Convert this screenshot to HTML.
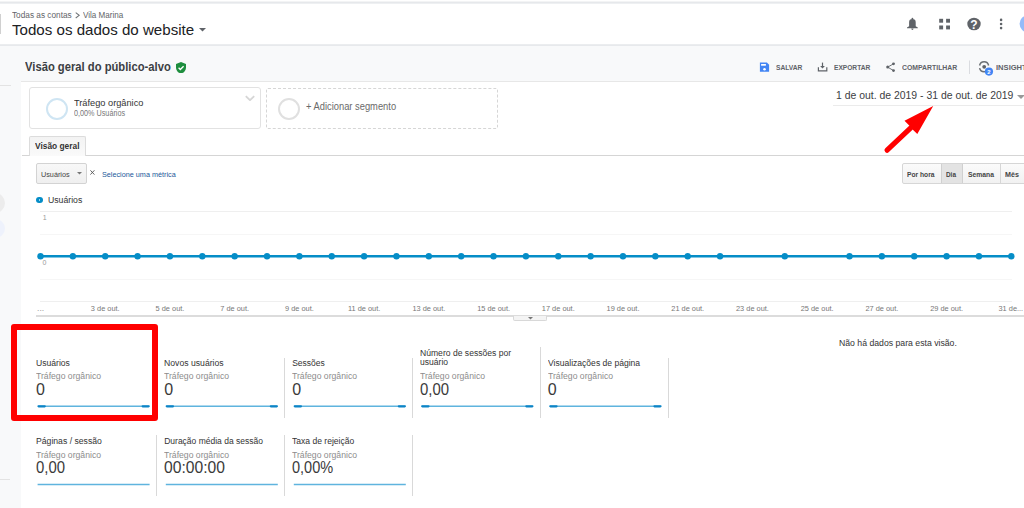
<!DOCTYPE html>
<html><head><meta charset="utf-8">
<style>
*{margin:0;padding:0;box-sizing:border-box}
html,body{width:1024px;height:508px;overflow:hidden;background:#f8f9fa;font-family:"Liberation Sans",sans-serif;position:relative}
.a{position:absolute}
.t{position:absolute;line-height:1;white-space:nowrap;transform-origin:0 0}
</style></head><body>
<!-- header -->
<div class="a" style="left:0;top:0;width:1024px;height:45px;background:#fff"></div>
<div class="a" style="left:0;top:1px;width:1024px;height:1px;background:#f3f4f5"></div>
<div class="a" style="left:0;top:2px;width:1024px;height:1px;background:#e6e8eb"></div>
<div class="a" style="left:0;top:3px;width:1024px;height:1px;background:#eef0f2"></div>
<div class="a" style="left:0;top:44px;width:1024px;height:1px;background:#ebedef"></div>
<div class="a" style="left:0;top:45px;width:1024px;height:1px;background:#e7e9ec"></div>
<div class="a" style="left:0;top:14px;width:1px;height:20px;background:#d0d0d0"></div>
<svg class="a" style="left:0;top:0" width="100" height="30"><path d="M75.7 12.6L79.2 15.3L75.7 18" stroke="#6f7377" stroke-width="1.05" fill="none"/></svg>
<svg class="a" style="left:199px;top:28px" width="7" height="4"><path d="M0 0L7 0L3.5 3.5Z" fill="#5f6368"/></svg>

<!-- header icons -->
<svg class="a" style="left:0;top:0" width="1024" height="45">
<path d="M909.1 22.2Q909.1 19.1 912.4 19.1Q915.7 19.1 915.7 22.2V26.3L917.8 27.5V28.3H907V27.5L909.1 26.3Z" fill="#5f6368"/><ellipse cx="912.4" cy="18.7" rx="0.9" ry="1" fill="#5f6368"/>
<path d="M911.3 28.6h2.2c0 .7-.5 1.5-1.1 1.5s-1.1-.8-1.1-1.5z" fill="#5f6368"/>
<rect x="939.2" y="18.8" width="3.9" height="3.9" fill="#5f6368"/><rect x="946.1" y="18.8" width="3.9" height="3.9" fill="#5f6368"/><rect x="939.2" y="25.5" width="3.9" height="3.9" fill="#5f6368"/><rect x="946.1" y="25.5" width="3.9" height="3.9" fill="#5f6368"/>
<ellipse cx="974" cy="24" rx="6.7" ry="6.3" fill="#5f6368"/>
<text x="974" y="28.7" text-anchor="middle" font-family="Liberation Sans" font-weight="700" font-size="12" fill="#fff">?</text>
<circle cx="1001.1" cy="19.9" r="1.3" fill="#5f6368"/><circle cx="1001.1" cy="24" r="1.3" fill="#5f6368"/><circle cx="1001.1" cy="28.1" r="1.3" fill="#5f6368"/>
<circle cx="1028.4" cy="23.8" r="8.8" fill="#94bbf9"/>
</svg>

<!-- sidebar faint -->
<div class="a" style="left:0;top:85px;width:10.6px;height:1px;background:#e3e3e3"></div>
<div class="a" style="left:0;top:479px;width:10px;height:1px;background:#e3e3e3"></div>
<div class="a" style="left:-15px;top:193px;width:20px;height:20px;border-radius:50%;background:#ececec"></div>
<div class="a" style="left:-15px;top:219px;width:20px;height:19px;border-radius:50%;background:#eef2fc"></div>

<!-- title shield -->
<svg class="a" style="left:176px;top:61.5px" width="10" height="11.5" viewBox="0 0 10 11.5"><path d="M5 0L0 2v3.4c0 3 2.1 5.5 5 6.1 2.9-.6 5-3.1 5-6.1V2z" fill="#1e8e3e"/><path d="M2.6 5.8l1.7 1.7 3.3-3.3" stroke="#fff" stroke-width="1.3" fill="none"/></svg>

<!-- actions icons -->
<svg class="a" style="left:0;top:0" width="1024" height="81">
<path d="M759.9 62.6h7l2.2 2.2v6.85h-9.2z" fill="#4285f4"/><rect x="761.1" y="64" width="4.8" height="1.7" fill="#fff"/><circle cx="764.5" cy="69.2" r="1.25" fill="#fff"/>
<path d="M822.5 62.6v4.2" stroke="#5f6368" stroke-width="1.2"/><path d="M820.1 66.1h4.8l-2.4 2.5z" fill="#5f6368"/>
<path d="M818.4 67.2v3.7h8.4v-3.7" stroke="#5f6368" stroke-width="1.2" fill="none"/>
<circle cx="893.5" cy="63.85" r="1.45" fill="#5f6368"/><circle cx="887.7" cy="67.1" r="1.5" fill="#5f6368"/><circle cx="893.5" cy="70.6" r="1.45" fill="#5f6368"/>
<path d="M893.5 63.85L887.7 67.1L893.5 70.6" stroke="#5f6368" stroke-width="0.9" fill="none"/>
<rect x="969" y="60.5" width="1" height="13.5" fill="#dadce0"/>
<path d="M979.6 65.5A4.6 4.6 0 0 1 988.6 65.5M988.6 68.1A4.6 4.6 0 0 1 979.6 68.1" stroke="#6b6f73" stroke-width="1.5" fill="none"/>
<circle cx="984.2" cy="66.8" r="1.9" fill="#5f6368"/>
<circle cx="988.95" cy="71.6" r="4.1" fill="#4285f4"/>
<text x="988.95" y="73.9" text-anchor="middle" font-family="Liberation Sans" font-weight="700" font-size="6" fill="#fff">2</text>
</svg>

<!-- white panel -->
<div class="a" style="left:21px;top:81px;width:1003px;height:427px;background:#fff;border-top:1px solid #e7e7e7"></div>

<!-- segments -->
<div class="a" style="left:29px;top:87px;width:231.5px;height:42px;border:1px solid #e2e2e2;border-radius:3px;background:#fff"></div>
<div class="a" style="left:46px;top:97.5px;width:22px;height:22px;border-radius:50%;border:2.5px solid #cfe5f3"></div>
<svg class="a" style="left:245px;top:95px" width="10" height="6"><path d="M0.8 1.2L5 5.2L9.2 1.2" stroke="#d6d6d6" stroke-width="1.8" fill="none"/></svg>
<div class="a" style="left:266px;top:88px;width:232px;height:41px;border:1px dashed #d6d6d6;border-radius:2px"></div>
<div class="a" style="left:278px;top:97.5px;width:22px;height:22px;border-radius:50%;border:2.5px solid #e0e0e0"></div>

<!-- date range -->
<svg class="a" style="left:1017px;top:95px" width="8" height="4"><path d="M0 0H8L4 4Z" fill="#999"/></svg>
<div class="a" style="left:833px;top:105px;width:191px;height:1px;background:#ebebeb"></div>

<!-- tab -->
<div class="a" style="left:22px;top:155px;width:1002px;height:1px;background:#d5d5d5"></div>
<div class="a" style="left:29.4px;top:136px;width:56.6px;height:20px;border:1px solid #dcdcdc;border-bottom:none;background:linear-gradient(#f3f3f3,#fafafa);border-radius:2px 2px 0 0"></div>

<!-- metric select -->
<div class="a" style="left:35.8px;top:163px;width:51px;height:21px;border:1px solid #d3d3d3;border-radius:2px;background:linear-gradient(#f8f8f8,#efefef)"></div>
<svg class="a" style="left:76.5px;top:172.4px" width="5" height="3"><path d="M0 0H5L2.5 2.5Z" fill="#777"/></svg>
<svg class="a" style="left:89.8px;top:169.8px" width="5" height="6"><path d="M0.4 0.3L4.4 4.6M4.4 0.3L0.4 4.6" stroke="#555" stroke-width="0.9"/></svg>

<!-- period buttons -->
<div class="a" style="left:902px;top:163px;width:130px;height:21px;border:1px solid #d6d6d6;border-radius:2px;background:linear-gradient(#fbfbfb,#f1f1f1)"></div>
<div class="a" style="left:940.5px;top:164px;width:22.5px;height:19px;background:#e3e3e3;border-left:1px solid #d0d0d0;border-right:1px solid #d0d0d0"></div>
<div class="a" style="left:1000px;top:164px;width:1px;height:19px;background:#d6d6d6"></div>

<!-- legend -->
<div class="a" style="left:35.5px;top:196.9px;width:7.5px;height:6.3px;border-radius:3px;background:#058dc7"></div>
<div class="a" style="left:38.5px;top:199.3px;width:1.5px;height:1.5px;background:#9fd3ea"></div>

<!-- chart -->
<div class="a" style="left:40px;top:211px;width:972px;height:1px;background:#efefef"></div>
<div class="a" style="left:40px;top:233.5px;width:972px;height:1px;background:#f6f6f6"></div>
<div class="a" style="left:40px;top:278.5px;width:972px;height:1px;background:#f6f6f6"></div>
<div class="a" style="left:40px;top:301px;width:972px;height:1px;background:#efefef"></div>
<div class="a" style="left:36px;top:315px;width:988px;height:1.6px;background:#dcdcdc"></div>
<svg class="a" style="left:0;top:0" width="1024" height="508"><line x1="40.5" y1="256.3" x2="1011.3" y2="256.3" stroke="#058dc7" stroke-width="2.6"/><g fill="#058dc7"><circle cx="40.50" cy="256.3" r="3.2"/><circle cx="72.86" cy="256.3" r="3.2"/><circle cx="105.22" cy="256.3" r="3.2"/><circle cx="137.58" cy="256.3" r="3.2"/><circle cx="169.94" cy="256.3" r="3.2"/><circle cx="202.30" cy="256.3" r="3.2"/><circle cx="234.66" cy="256.3" r="3.2"/><circle cx="267.02" cy="256.3" r="3.2"/><circle cx="299.38" cy="256.3" r="3.2"/><circle cx="331.74" cy="256.3" r="3.2"/><circle cx="364.10" cy="256.3" r="3.2"/><circle cx="396.46" cy="256.3" r="3.2"/><circle cx="428.82" cy="256.3" r="3.2"/><circle cx="461.18" cy="256.3" r="3.2"/><circle cx="493.54" cy="256.3" r="3.2"/><circle cx="525.90" cy="256.3" r="3.2"/><circle cx="558.26" cy="256.3" r="3.2"/><circle cx="590.62" cy="256.3" r="3.2"/><circle cx="622.98" cy="256.3" r="3.2"/><circle cx="655.34" cy="256.3" r="3.2"/><circle cx="687.70" cy="256.3" r="3.2"/><circle cx="720.06" cy="256.3" r="3.2"/><circle cx="784.78" cy="256.3" r="3.2"/><circle cx="849.50" cy="256.3" r="3.2"/><circle cx="881.86" cy="256.3" r="3.2"/><circle cx="914.22" cy="256.3" r="3.2"/><circle cx="946.58" cy="256.3" r="3.2"/><circle cx="978.94" cy="256.3" r="3.2"/><circle cx="1011.30" cy="256.3" r="3.2"/></g></svg>
<div class="a" style="left:513px;top:315.5px;width:34px;height:5.5px;background:#f4f4f4;border:1px solid #d8d8d8;border-top:none;border-radius:0 0 2px 2px"></div>
<svg class="a" style="left:527.5px;top:317px" width="5" height="3"><path d="M0 0H5L2.5 2.5Z" fill="#777"/></svg>

<div class="a" style="left:155.8px;top:357.5px;width:1px;height:60.5px;background:#d9d9d9"></div>
<div class="a" style="left:284.1px;top:357.5px;width:1px;height:60.5px;background:#d9d9d9"></div>
<div class="a" style="left:411.8px;top:357.5px;width:1px;height:60.5px;background:#d9d9d9"></div>
<div class="a" style="left:539.9px;top:347.1px;width:1px;height:71.4px;background:#d9d9d9"></div>
<div class="a" style="left:667.7px;top:357.5px;width:1px;height:60.5px;background:#d9d9d9"></div>
<div class="a" style="left:155.8px;top:434.5px;width:1px;height:61.5px;background:#d9d9d9"></div>
<div class="a" style="left:284.1px;top:434.5px;width:1px;height:61.5px;background:#d9d9d9"></div>
<div class="a" style="left:411.8px;top:434.5px;width:1px;height:61.5px;background:#d9d9d9"></div><svg class="a" style="left:0;top:0" width="1024" height="508"><line x1="37.6" y1="406.35" x2="149.6" y2="406.35" stroke="#5fb4de" stroke-width="1.5"/><line x1="38.6" y1="406.35" x2="44.8" y2="406.35" stroke="#0c84c6" stroke-width="2.1" stroke-linecap="round"/><line x1="142.6" y1="406.35" x2="148.6" y2="406.35" stroke="#0c84c6" stroke-width="2.1" stroke-linecap="round"/><line x1="165.8" y1="406.35" x2="277.8" y2="406.35" stroke="#5fb4de" stroke-width="1.5"/><line x1="166.8" y1="406.35" x2="173.0" y2="406.35" stroke="#0c84c6" stroke-width="2.1" stroke-linecap="round"/><line x1="270.8" y1="406.35" x2="276.8" y2="406.35" stroke="#0c84c6" stroke-width="2.1" stroke-linecap="round"/><line x1="293.8" y1="406.35" x2="405.8" y2="406.35" stroke="#5fb4de" stroke-width="1.5"/><line x1="294.8" y1="406.35" x2="301.0" y2="406.35" stroke="#0c84c6" stroke-width="2.1" stroke-linecap="round"/><line x1="398.8" y1="406.35" x2="404.8" y2="406.35" stroke="#0c84c6" stroke-width="2.1" stroke-linecap="round"/><line x1="421.3" y1="406.35" x2="533.3" y2="406.35" stroke="#5fb4de" stroke-width="1.5"/><line x1="422.3" y1="406.35" x2="428.5" y2="406.35" stroke="#0c84c6" stroke-width="2.1" stroke-linecap="round"/><line x1="526.3" y1="406.35" x2="532.3" y2="406.35" stroke="#0c84c6" stroke-width="2.1" stroke-linecap="round"/><line x1="549.4" y1="406.35" x2="661.4" y2="406.35" stroke="#5fb4de" stroke-width="1.5"/><line x1="550.4" y1="406.35" x2="556.6" y2="406.35" stroke="#0c84c6" stroke-width="2.1" stroke-linecap="round"/><line x1="654.4" y1="406.35" x2="660.4" y2="406.35" stroke="#0c84c6" stroke-width="2.1" stroke-linecap="round"/><line x1="37.6" y1="484.55" x2="149.6" y2="484.55" stroke="#5fb4de" stroke-width="1.5"/><line x1="165.8" y1="484.55" x2="277.8" y2="484.55" stroke="#5fb4de" stroke-width="1.5"/><line x1="293.8" y1="484.55" x2="405.8" y2="484.55" stroke="#5fb4de" stroke-width="1.5"/></svg>
<div class="t" style="left:12.00px;top:10.81px;font-size:9.2px;color:#5f6368;transform:scaleX(0.8982);">Todas as contas</div>
<div class="t" style="left:83.00px;top:10.81px;font-size:9.2px;color:#5f6368;transform:scaleX(0.8783);">Vila Marina</div>
<div class="t" style="left:12.00px;top:21.60px;font-size:15px;color:#202124;transform:scaleX(1.0066);">Todos os dados do website</div>
<div class="t" style="left:25.00px;top:61.09px;font-size:12.3px;font-weight:700;color:#3c4043;transform:scaleX(0.9129);">Visão geral do público-alvo</div>
<div class="t" style="left:776.00px;top:63.83px;font-size:8px;font-weight:700;color:#5f6368;transform:scaleX(0.8332);">SALVAR</div>
<div class="t" style="left:834.00px;top:63.83px;font-size:8px;font-weight:700;color:#5f6368;transform:scaleX(0.8258);">EXPORTAR</div>
<div class="t" style="left:902.00px;top:63.83px;font-size:8px;font-weight:700;color:#5f6368;transform:scaleX(0.8588);">COMPARTILHAR</div>
<div class="t" style="left:995.80px;top:63.83px;font-size:8px;font-weight:700;color:#5f6368;transform:scaleX(0.9468);">INSIGHTS</div>
<div class="t" style="left:836.10px;top:89.97px;font-size:10.9px;color:#3c4043;transform:scaleX(0.9571);">1 de out. de 2019 - 31 de out. de 2019</div>
<div class="t" style="left:74.30px;top:97.80px;font-size:9.8px;color:#333;transform:scaleX(0.9414);">Tráfego orgânico</div>
<div class="t" style="left:74.10px;top:110.06px;font-size:8.2px;color:#777;transform:scaleX(0.8838);">0,00% Usuários</div>
<div class="t" style="left:305.70px;top:101.63px;font-size:10px;color:#6a6a6a;transform:scaleX(0.9339);">+ Adicionar segmento</div>
<div class="t" style="left:35.00px;top:140.67px;font-size:9.6px;font-weight:700;color:#333;transform:scaleX(0.8718);">Visão geral</div>
<div class="t" style="left:41.30px;top:170.63px;font-size:8px;color:#444;transform:scaleX(0.9060);">Usuários</div>
<div class="t" style="left:102.10px;top:170.63px;font-size:8px;color:#22599a;transform:scaleX(0.9057);">Selecione uma métrica</div>
<div class="t" style="left:907.30px;top:170.70px;font-size:7.8px;font-weight:700;color:#444;transform:scaleX(0.8587);">Por hora</div>
<div class="t" style="left:946.40px;top:170.70px;font-size:7.8px;font-weight:700;color:#444;transform:scaleX(0.8205);">Dia</div>
<div class="t" style="left:968.40px;top:170.70px;font-size:7.8px;font-weight:700;color:#444;transform:scaleX(0.8702);">Semana</div>
<div class="t" style="left:1004.70px;top:170.70px;font-size:7.8px;font-weight:700;color:#444;transform:scaleX(0.9159);">Mês</div>
<div class="t" style="left:48.00px;top:195.80px;font-size:8.5px;color:#333;transform:scaleX(1.0213);">Usuários</div>
<div class="t" style="left:42.80px;top:214.17px;font-size:7px;color:#999;">1</div>
<div class="t" style="left:42.60px;top:259.07px;font-size:7px;color:#999;">0</div>
<div class="t" style="left:90.86px;top:304.54px;font-size:7.4px;color:#777;">3 de out.</div>
<div class="t" style="left:155.58px;top:304.54px;font-size:7.4px;color:#777;">5 de out.</div>
<div class="t" style="left:220.30px;top:304.54px;font-size:7.4px;color:#777;">7 de out.</div>
<div class="t" style="left:285.02px;top:304.54px;font-size:7.4px;color:#777;">9 de out.</div>
<div class="t" style="left:347.96px;top:304.54px;font-size:7.4px;color:#777;">11 de out.</div>
<div class="t" style="left:412.41px;top:304.54px;font-size:7.4px;color:#777;">13 de out.</div>
<div class="t" style="left:477.13px;top:304.54px;font-size:7.4px;color:#777;">15 de out.</div>
<div class="t" style="left:541.85px;top:304.54px;font-size:7.4px;color:#777;">17 de out.</div>
<div class="t" style="left:606.57px;top:304.54px;font-size:7.4px;color:#777;">19 de out.</div>
<div class="t" style="left:671.29px;top:304.54px;font-size:7.4px;color:#777;">21 de out.</div>
<div class="t" style="left:736.01px;top:304.54px;font-size:7.4px;color:#777;">23 de out.</div>
<div class="t" style="left:800.73px;top:304.54px;font-size:7.4px;color:#777;">25 de out.</div>
<div class="t" style="left:865.45px;top:304.54px;font-size:7.4px;color:#777;">27 de out.</div>
<div class="t" style="left:930.17px;top:304.54px;font-size:7.4px;color:#777;">29 de out.</div>
<div class="t" style="left:36.80px;top:304.54px;font-size:7.4px;color:#888;transform:scaleX(1.1627);">...</div>
<div class="t" style="left:998.50px;top:304.54px;font-size:7.4px;color:#777;">31 de...</div>
<div class="t" style="left:839.00px;top:337.84px;font-size:9.4px;color:#333;transform:scaleX(0.9268);">Não há dados para esta visão.</div>
<div class="t" style="left:36.00px;top:358.70px;font-size:8.5px;color:#333;transform:scaleX(1.0093);">Usuários</div>
<div class="t" style="left:36.00px;top:372.40px;font-size:8.5px;color:#8c8c8c;transform:scaleX(1.0169);">Tráfego orgânico</div>
<div class="t" style="left:36.00px;top:381.66px;font-size:16px;color:#3a3a3a;">0</div>
<div class="t" style="left:164.20px;top:358.70px;font-size:8.5px;color:#333;transform:scaleX(1.0183);">Novos usuários</div>
<div class="t" style="left:164.20px;top:372.40px;font-size:8.5px;color:#8c8c8c;transform:scaleX(1.0169);">Tráfego orgânico</div>
<div class="t" style="left:164.20px;top:381.66px;font-size:16px;color:#3a3a3a;">0</div>
<div class="t" style="left:292.20px;top:358.70px;font-size:8.5px;color:#333;">Sessões</div>
<div class="t" style="left:292.20px;top:372.40px;font-size:8.5px;color:#8c8c8c;transform:scaleX(1.0169);">Tráfego orgânico</div>
<div class="t" style="left:292.20px;top:381.66px;font-size:16px;color:#3a3a3a;">0</div>
<div class="t" style="left:419.70px;top:348.50px;font-size:8.5px;color:#333;transform:scaleX(1.0099);">Número de sessões por</div>
<div class="t" style="left:419.70px;top:358.00px;font-size:8.5px;color:#333;transform:scaleX(1.0053);">usuário</div>
<div class="t" style="left:419.70px;top:372.40px;font-size:8.5px;color:#8c8c8c;transform:scaleX(1.0169);">Tráfego orgânico</div>
<div class="t" style="left:419.70px;top:381.66px;font-size:16px;color:#3a3a3a;transform:scaleX(0.9314);">0,00</div>
<div class="t" style="left:547.80px;top:358.70px;font-size:8.5px;color:#333;transform:scaleX(1.0066);">Visualizações de página</div>
<div class="t" style="left:547.80px;top:372.40px;font-size:8.5px;color:#8c8c8c;transform:scaleX(1.0169);">Tráfego orgânico</div>
<div class="t" style="left:547.80px;top:381.66px;font-size:16px;color:#3a3a3a;">0</div>
<div class="t" style="left:36.00px;top:436.90px;font-size:8.5px;color:#333;transform:scaleX(1.0168);">Páginas / sessão</div>
<div class="t" style="left:36.00px;top:450.60px;font-size:8.5px;color:#8c8c8c;transform:scaleX(1.0169);">Tráfego orgânico</div>
<div class="t" style="left:36.00px;top:459.86px;font-size:16px;color:#3a3a3a;transform:scaleX(0.9314);">0,00</div>
<div class="t" style="left:164.20px;top:436.90px;font-size:8.5px;color:#333;">Duração média da sessão</div>
<div class="t" style="left:164.20px;top:450.60px;font-size:8.5px;color:#8c8c8c;transform:scaleX(1.0169);">Tráfego orgânico</div>
<div class="t" style="left:164.20px;top:459.86px;font-size:16px;color:#3a3a3a;transform:scaleX(0.9778);">00:00:00</div>
<div class="t" style="left:292.20px;top:436.90px;font-size:8.5px;color:#333;transform:scaleX(1.0053);">Taxa de rejeição</div>
<div class="t" style="left:292.20px;top:450.60px;font-size:8.5px;color:#8c8c8c;transform:scaleX(1.0169);">Tráfego orgânico</div>
<div class="t" style="left:292.20px;top:459.86px;font-size:16px;color:#3a3a3a;transform:scaleX(0.9083);">0,00%</div>

<!-- red box -->
<div class="a" style="left:11px;top:324px;width:147px;height:96.5px;border:6.7px solid #f00;border-radius:3px"></div>
<!-- red arrow -->
<svg class="a" style="left:0;top:0" width="1024" height="508"><line x1="887.1" y1="150.2" x2="911" y2="127.6" stroke="#f00" stroke-width="5.2" stroke-linecap="round"/><path d="M933.2 105.9L904.5 120.7L909 125.2L913.1 130.1L917.3 133.9Z" fill="#f00"/></svg>
</body></html>
